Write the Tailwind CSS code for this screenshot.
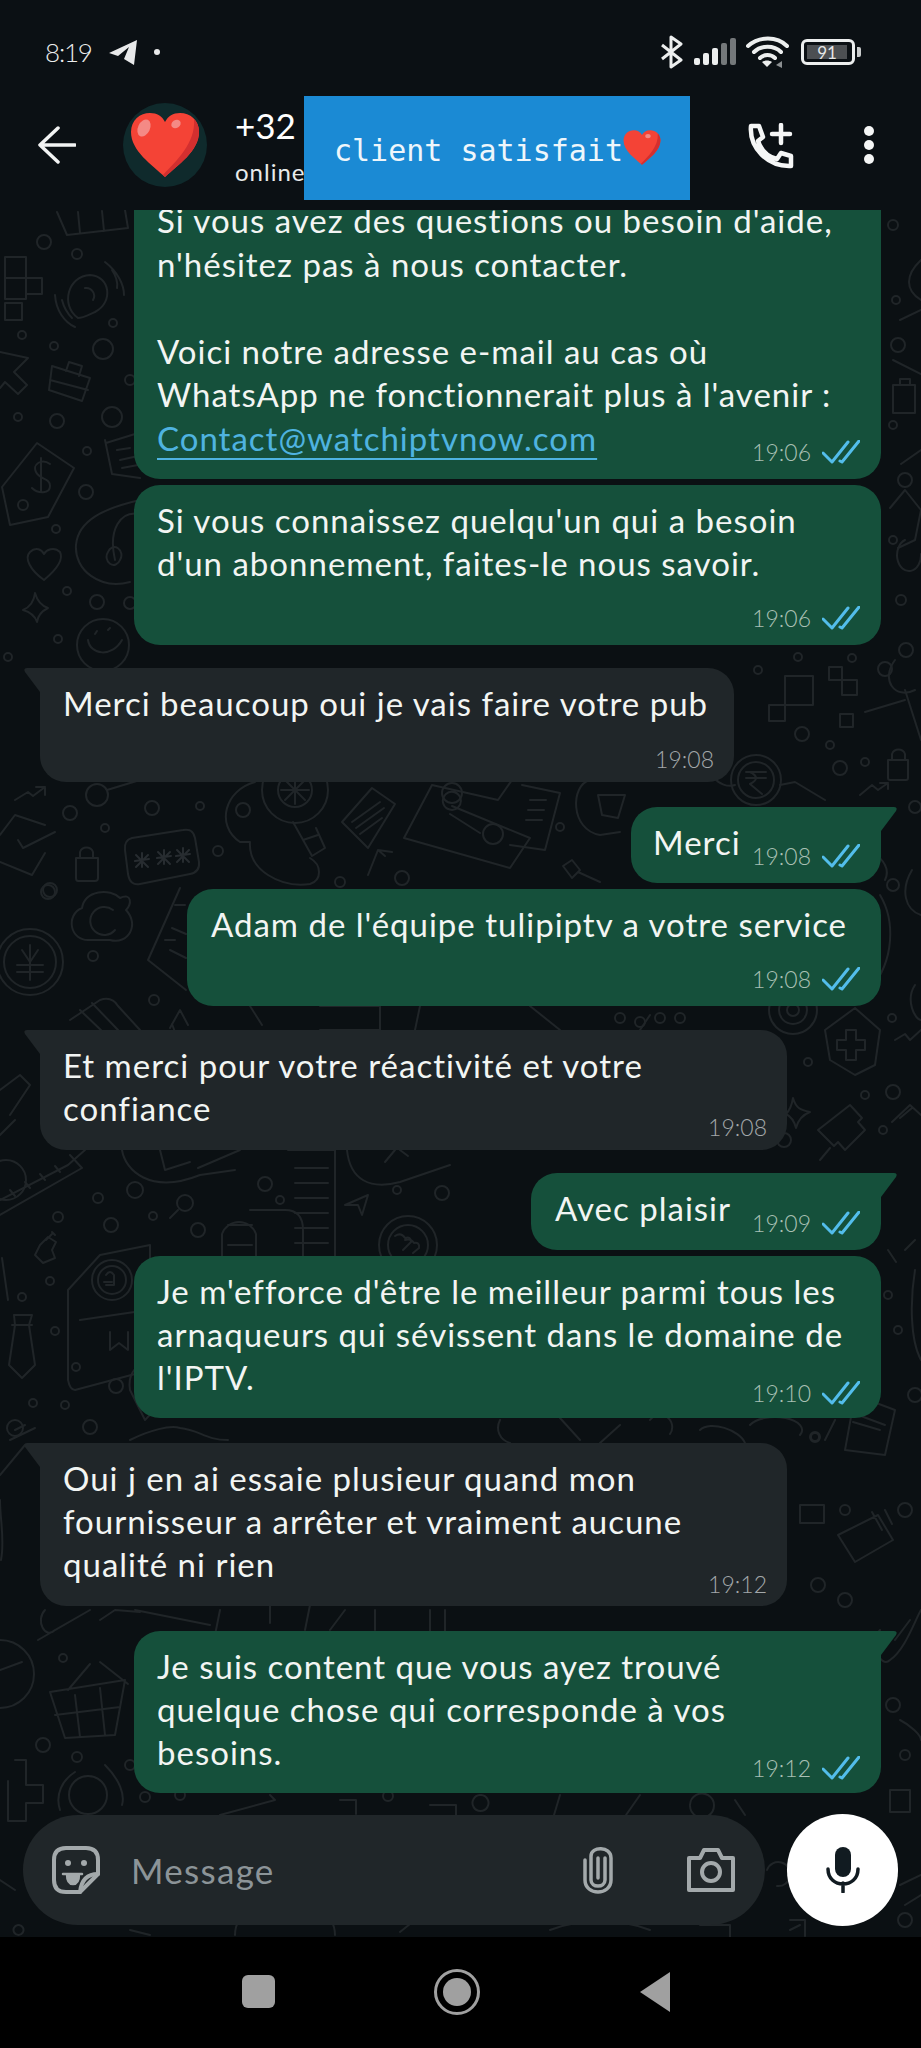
<!DOCTYPE html>
<html lang="fr">
<head>
<meta charset="UTF-8">
<title>WhatsApp</title>
<script src="https://cdn.jsdelivr.net/npm/@tailwindcss/browser@4"></script>
</head>
<body class="bg-black">
<div class="relative w-[921px] h-[2048px] overflow-hidden flex flex-col bg-[#0b1013] text-white [font-family:Lato,sans-serif]">

  <!-- wallpaper doodles -->
  <svg class="absolute inset-0" width="921" height="2048" viewBox="0 0 921 2048" fill="none" stroke="#202528" stroke-width="2" stroke-linecap="round" stroke-linejoin="round">
    <!-- left column, top -->
    <path d="M57 212 L67 235 L128 228 L125 210 M78 212 L80 233 M102 211 L104 231"/>
    <path d="M5 257h21v21h-21z M26 278h16v16h-16z M5 278h21v21h-21z M5 303h17v17h-17z"/>
    <path d="M78 318 C60 305 68 276 90 275 C110 276 114 302 95 312 C88 315 83 318 78 318 Z M85 288 a8 8 0 0 1 8 12 M105 262 C118 272 124 285 124 295 M112 270 C116 276 118 282 117 288 M55 295 C56 310 64 322 75 327 M62 300 C64 308 68 314 72 318"/>
    <path d="M0 352 L28 358 L14 372 L27 385 L18 394 L5 382 L0 388"/>
    <path d="M52 366 L90 378 L82 401 L49 390 Z M66 371 L69 362 L82 366 L79 376 M50 380 L88 390"/>
    <path d="M37 443 L74 468 L48 517 L10 525 L2 487 Z M50 464 C42 458 32 464 36 472 C40 480 50 478 50 486 C50 494 38 494 32 488 M41 458 L41 492"/>
    <path d="M106 443 L135 434 M105 440 L112 474 L140 478 M117 450 L130 448 M120 460 L138 456 M122 468 L138 465"/>
    <path d="M140 500 C105 508 78 520 76 545 C74 570 100 590 130 582 M115 560 C108 530 120 510 140 514 M108 552 a7 8 0 1 0 12 8 a7 8 0 1 0 -12 -8"/>
    <path d="M44 580 C30 570 24 558 30 552 C36 546 42 550 44 554 C46 550 54 546 60 552 C64 560 56 570 44 580 Z"/>
    <path d="M35 593 C34 602 30 607 23 610 C30 612 35 616 37 622 C38 615 42 611 48 608 C42 606 37 600 35 593 Z"/>
    <circle cx="103" cy="645" r="26"/><path d="M88 640 C90 655 112 658 122 640 M95 634 l2 -3 M108 630 l2 -2"/>
    <g>
      <circle cx="44" cy="242" r="7"/><circle cx="77" cy="254" r="5"/><circle cx="113" cy="323" r="4"/><circle cx="103" cy="349" r="10"/>
      <circle cx="22" cy="335" r="4"/><circle cx="54" cy="346" r="4"/><circle cx="57" cy="421" r="7"/><circle cx="18" cy="417" r="4"/>
      <circle cx="112" cy="417" r="10"/><circle cx="87" cy="451" r="4"/><circle cx="86" cy="492" r="7"/><circle cx="56" cy="529" r="4"/>
      <circle cx="67" cy="591" r="4"/><circle cx="97" cy="602" r="7"/><circle cx="58" cy="639" r="4"/><circle cx="8" cy="657" r="4"/>
      <circle cx="23" cy="505" r="5"/><circle cx="130" cy="380" r="5"/><circle cx="130" cy="603" r="6"/>
    </g>

    <!-- gap under first incoming -->
    <path d="M15 800 L28 792 L33 796 L45 787 M36 787 h9 v8"/>
    <circle cx="97" cy="795" r="11"/><path d="M107 790 L140 780"/>
    <circle cx="70" cy="813" r="7"/><circle cx="152" cy="808" r="7"/><circle cx="200" cy="806" r="4"/><circle cx="243" cy="810" r="7"/><circle cx="105" cy="828" r="4"/>
    <circle cx="218" cy="851" r="5"/><circle cx="48" cy="892" r="7"/><circle cx="340" cy="882" r="5"/><circle cx="402" cy="878" r="7"/>
    <path d="M0 835 L15 815 L45 825 M0 862 L32 875 L45 853 M18 840 L23 848 L55 832"/>
    <path d="M76 858 h22 v20 q0 3 -3 3 h-17 q-2 0 -2 -3 z M80 858 v-6 a7 7 0 0 1 13 0 v6"/>
    <path d="M132 838 Q124 840 125 850 L128 874 Q130 886 140 884 L190 874 Q200 872 199 862 L195 838 Q193 828 183 830 Z"/>
    <path d="M135 861 l14 -2 M142 853 v14 M136 855 l12 12 M148 855 l-12 12 M157 858 l14 -2 M164 850 v14 M158 852 l12 12 M170 852 l-12 12 M176 856 l14 -2 M183 848 v14 M177 850 l12 12 M189 850 l-12 12" stroke="#272c30"/>
    <path d="M255 782 C225 790 215 825 240 842 L250 842 C248 870 280 888 310 884 C322 880 322 865 310 858"/>
    <circle cx="295" cy="790" r="33"/><circle cx="295" cy="790" r="17"/><path d="M285 780 l20 20 M305 780 l-20 20 M295 776 v28 M281 790 h28"/>
    <path d="M293 822 L312 856 L325 848 L316 828 M303 840 l15 -5"/>
    <path d="M342 822 L372 788 L395 804 L368 848 Z M352 822 l28 -20 M356 828 l28 -20 M360 834 l22 -16"/>
    <path d="M368 875 L378 850 L385 856 M378 850 L392 852"/>
    <path d="M404 838 L432 785 M404 838 L510 868 L530 838 L452 806 M432 785 L498 800 L512 780 M445 795 a9 9 0 1 0 1 -1 M450 814 L480 833"/>
    <circle cx="493" cy="834" r="10"/><circle cx="452" cy="793" r="10"/>
    <path d="M522 785 L560 793 L545 850 L510 845 M530 800 h16 M528 810 h16 M526 820 h16"/>
    <path d="M590 780 C570 785 570 830 600 835 L620 832 M598 795 L625 795 L618 818 L602 815 Z"/>
    <circle cx="560" cy="827" r="4"/><path d="M563 866 L572 860 L580 870 L572 878 Z M578 872 L600 882"/>

    <!-- cloud / clock / clipboard -->
    <path d="M90 940 C70 942 65 915 82 908 C85 890 110 888 120 898 C132 892 132 905 126 910 C140 925 128 945 110 940 Z M113 910 a14 14 0 1 0 2 20"/>
    <circle cx="30" cy="962" r="33"/><circle cx="30" cy="962" r="26"/><path d="M22 950 L30 962 L38 950 M30 945 V980 M17 965 h26 M17 972 h26"/>
    <circle cx="50" cy="890" r="7"/><circle cx="93" cy="956" r="5"/><circle cx="154" cy="1000" r="5"/>
    <path d="M180 888 L148 960 L186 990 M185 905 h-10 M175 940 h-10 M170 950 l16 8 M172 928 l14 6"/>
    <path d="M70 1020 L100 1000 Q112 996 118 1006 L140 1030 M80 1010 L105 1034 M92 1003 L118 1030"/>
    <path d="M170 1028 L180 1010 L188 1025 M178 1040 L172 1024"/>

    <!-- right column -->
    <path d="M785 676h28v29h-28z M769 705h16v16h-16z M829 667h13v13h-13z M842 680h15v15h-15z M840 714h13v13h-13z"/>
    <circle cx="758" cy="670" r="4"/><circle cx="798" cy="657" r="4"/><circle cx="852" cy="658" r="4"/><circle cx="885" cy="669" r="7"/>
    <circle cx="802" cy="734" r="7"/><circle cx="830" cy="745" r="4"/><circle cx="840" cy="768" r="7"/><circle cx="865" cy="762" r="4"/>
    <path d="M888 760 h20 v18 q0 2 -2 2 h-16 q-2 0 -2 -2 z M892 760 v-6 a7 7 0 0 1 13 0 v6 M865 712 L905 700 M905 690 L921 740 M895 660 C880 680 895 700 915 690"/>
    <path d="M860 795 L872 785 L878 790 L888 783 M880 783 h8 v6"/>
    <circle cx="756" cy="780" r="25"/><circle cx="756" cy="780" r="18"/><path d="M746 772 h20 M746 778 h20 M750 772 q12 6 0 12 l12 10"/>
    <path d="M720 758 C700 770 720 790 735 785 M780 785 L795 782 L825 800"/>
    <circle cx="915" cy="807" r="6"/><path d="M868 830 L884 824"/>
    <path d="M880 895 C895 920 895 960 870 990 M870 850 C885 860 890 870 885 880"/>
    <circle cx="893" cy="885" r="6"/><path d="M912 870 C900 890 905 910 921 915 M915 985 C905 1000 915 1020 921 1020"/>
    <circle cx="793" cy="1010" r="6"/><circle cx="793" cy="1010" r="14"/><circle cx="793" cy="1010" r="24"/>
    <path d="M825 1030 L855 1008 L880 1030 L875 1065 L855 1075 L830 1060 Z"/>
    <path d="M846 1030 h10 v10 h9 v10 h-9 v10 h-10 v-10 h-9 v-10 h9 z"/>
    <circle cx="892" cy="1018" r="4"/><circle cx="808" cy="1062" r="4"/><circle cx="865" cy="1095" r="4"/><circle cx="893" cy="1092" r="7"/>
    <circle cx="883" cy="1130" r="4"/><circle cx="784" cy="1140" r="7"/>
    <path d="M793 1098 C796 1108 800 1110 810 1112 C802 1115 798 1120 796 1128 C794 1120 790 1116 786 1114 C790 1110 792 1104 793 1098 Z"/>
    <path d="M850 1105 L862 1118 L858 1122 L865 1130 L845 1150 L838 1142 L834 1146 L818 1130 Z M820 1160 L830 1148"/>
    <path d="M892 1122 L910 1105 L921 1115 M900 1118 l12 -10"/>
    <path d="M895 1040 L905 1034 L910 1040 L921 1030"/>
    <path d="M921 260 C905 275 905 290 921 300 M900 320 L921 310 M893 360 l28 14 M921 450 l-20 14 M905 540 a12 16 0 1 0 16 14"/>
    <circle cx="893" cy="225" r="5"/><circle cx="896" cy="300" r="4"/><circle cx="898" cy="345" r="7"/><circle cx="893" cy="425" r="4"/><circle cx="905" cy="480" r="7"/>
    <circle cx="893" cy="540" r="4"/><circle cx="901" cy="600" r="5"/><circle cx="906" cy="650" r="7"/>
    <path d="M893 385 h22 v28 h-22z M900 385 v-6 h10 v6"/>
    <path d="M890 508 L905 490 L921 510 L915 540 L898 548"/>

    <!-- gaps in the middle -->
    <path d="M250 1006 L262 1025 M320 1006 h60 v24 h-60 M420 1006 L415 1030 M530 1006 L560 1030 M650 1015 L640 1030"/>
    <circle cx="620" cy="1018" r="5"/><circle cx="640" cy="1022" r="5"/>
    <circle cx="660" cy="1018" r="5"/><circle cx="680" cy="1018" r="5"/>
    <path d="M0 1090 L20 1075 L30 1085 L10 1115 M0 1135 L15 1120"/>
    <circle cx="6" cy="1180" r="20"/>
    <path d="M85 1150 L68 1165 L0 1200 M70 1155 L82 1168 L0 1215 M10 1190 l5 6 M25 1182 l5 6 M40 1174 l5 6 M55 1166 l5 6"/>
    <circle cx="135" cy="1190" r="8"/><circle cx="98" cy="1198" r="5"/><circle cx="58" cy="1217" r="5"/><circle cx="111" cy="1225" r="7"/>
    <path d="M122 1150 C125 1170 150 1195 200 1175 L235 1170 M160 1150 L165 1170 L190 1162 M198 1168 L240 1150"/>
    <circle cx="265" cy="1184" r="7"/><circle cx="397" cy="1190" r="4"/><circle cx="442" cy="1193" r="7"/><circle cx="198" cy="1230" r="7"/><circle cx="153" cy="1216" r="4"/><circle cx="280" cy="1200" r="4"/>
    <circle cx="185" cy="1203" r="8"/><path d="M178 1210 L170 1218"/>
    <path d="M288 1150 h47 v120 h-47 M295 1168 h33 M295 1183 h33 M295 1198 h33 M295 1213 h33 M295 1228 h33 M295 1243 h33"/>
    <path d="M222 1256 v-22 a18 18 0 0 1 34 0 v22 M228 1225 h24 M228 1245 h24 M250 1210 h35 q18 0 18 20 v26"/>
    <path d="M347 1150 C350 1180 370 1190 400 1182 L450 1165 M395 1150 l-10 12 M400 1150 l8 6"/>
    <path d="M345 1205 L368 1195 L362 1215 L358 1205 Z"/>
    <circle cx="408" cy="1245" r="29"/><circle cx="408" cy="1245" r="20"/><path d="M395 1236 q6 -4 10 2 q6 -2 6 4 l-8 8 M405 1240 q6 -2 9 3 q6 -1 5 5 l-6 5"/>
    <path d="M2 1258 L8 1300"/>
    <path d="M68 1290 L100 1255 L150 1245 L150 1370 L75 1390 Q70 1390 68 1380 Z"/>
    <circle cx="112" cy="1280" r="20"/><circle cx="112" cy="1280" r="14"/><path d="M106 1275 q4 -6 8 0 v10 h-8 M104 1282 h8"/>
    <path d="M80 1320 L148 1310 M110 1332 v18 l9 -7 l9 7 v-18"/>
    <circle cx="50" cy="1281" r="4"/><circle cx="22" cy="1297" r="4"/><circle cx="55" cy="1331" r="4"/><circle cx="76" cy="1367" r="4"/><circle cx="33" cy="1403" r="4"/>
    <circle cx="65" cy="1405" r="4"/><circle cx="90" cy="1427" r="7"/>
    <path d="M14 1315 h18 l-3 10 l6 40 l-13 13 l-13 -13 l6 -40 z M12 1325 h20"/>
    <path d="M40 1245 l8 -8 l8 5 l-4 8 l3 8 l-12 5 l-8 -8 z M46 1240 l6 -6 M52 1232 l3 3"/>
    <path d="M130 1390 c-5 -30 30 -35 35 -10 c2 15 -10 30 -20 40 z"/><circle cx="116" cy="1386" r="7"/>
    <path d="M130 1440 C150 1430 170 1425 180 1428 C200 1430 205 1440 228 1440 M10 1440 L35 1428"/>
    <path d="M0 1475 L25 1445 M15 1430 l10 -5"/>
    <circle cx="15" cy="1428" r="8"/><path d="M1 1560 C5 1540 0 1520 0 1500"/>
    <path d="M700 1430 C710 1420 740 1430 745 1443 M750 1425 a 25 12 0 0 1 50 10 M825 1440 L835 1420"/>
    <circle cx="815" cy="1437" r="4"/><path d="M500 1420 C495 1430 500 1440 510 1443 M560 1418 L580 1440 M620 1425 L600 1443 M650 1420 a12 12 0 0 1 20 14"/>
    <path d="M855 1395 L895 1410 L885 1455 L845 1450 Z M860 1395 L868 1380 M850 1412 L885 1425 M853 1422 L880 1430"/>
    <circle cx="815" cy="1437" r="5"/><circle cx="905" cy="1510" r="7"/><circle cx="845" cy="1510" r="5"/>
    <path d="M800 1505 h24 v18 h-24z M838 1535 l40 -20 l15 25 l-38 22 z M872 1512 l10 18 M885 1510 l7 14"/>
    <circle cx="818" cy="1585" r="7"/><circle cx="845" cy="1600" r="7"/><circle cx="888" cy="1295" r="4"/><circle cx="898" cy="1330" r="4"/><circle cx="915" cy="1395" r="7"/>
    <path d="M880 1630 C870 1640 880 1670 890 1660 C905 1650 915 1620 921 1610 M895 1640 L910 1620"/>
    <path d="M905 1250 L915 1240 M888 1250 l8 12 M921 1360 C910 1340 910 1300 915 1270"/>
    <circle cx="893" cy="1705" r="7"/><circle cx="905" cy="1755" r="5"/><path d="M890 1790 h20 v22 h-20z M900 1720 C910 1725 921 1735 921 1740"/>
    <path d="M100 1620 L115 1610 L140 1612 M45 1610 C35 1620 45 1640 55 1630 L90 1610 M38 1640 L90 1610"/>
    <circle cx="63" cy="1658" r="4"/><circle cx="43" cy="1745" r="7"/><circle cx="77" cy="1757" r="5"/><circle cx="130" cy="1765" r="5"/>
    <path d="M0 1640 a33 33 0 1 1 0 68 M0 1670 l22 -8"/>
    <path d="M50 1692 L125 1680 L115 1735 L65 1738 Z M75 1695 l5 42 M100 1688 l5 47 M55 1715 L120 1707 M68 1690 l22 -26 M100 1662 l28 22"/>
    <path d="M15 1760 h11 v25 h17 v18 h-17 v18 h-18 v-40"/>
    <circle cx="88" cy="1795" r="19"/><path d="M60 1810 C55 1795 62 1780 75 1772 M105 1765 C120 1780 125 1795 122 1805"/>
    <path d="M135 1610 L210 1625 M220 1610 L215 1635 M248 1605 h22 v18 M310 1605 L305 1630 M345 1610 l-15 20 M375 1610 v20 M430 1610 v22 M445 1610 v22"/>
    <circle cx="145" cy="1797" r="5"/><circle cx="180" cy="1795" r="5"/><path d="M220 1815 L275 1800 L270 1795 M340 1800 h16 v14 M388 1796 m-5 0 a5 5 0 1 0 10 0 a5 5 0 1 0 -10 0 M430 1805 h26 v12 M480 1795 a8 8 0 1 0 1 0"/>
    <path d="M560 1795 l-6 20 M640 1795 l-14 20 M690 1805 a12 12 0 1 1 0 1 M735 1800 L745 1815"/>
    <path d="M790 1930 L800 1925 M130 1930 L150 1935 M235 1935 a40 30 0 0 1 100 0 M400 1932 l10 -8 M550 1930 a80 40 0 0 1 100 0"/>
    <path d="M767 1870 a12 12 0 1 1 10 16 M900 1885 L921 1875 M905 1905 l16 -10"/>
    <circle cx="905" cy="1920" r="7"/>
    <path d="M790 1920 h15 v16 M700 1925 h30 v12 M15 1890 L0 1880 M18 1925 a5 5 0 1 0 1 0"/>
  </svg>

  <!-- status bar + header -->
  <header class="relative z-10 h-[210px] shrink-0 bg-[#0b1014]">
    <div class="flex items-center h-[96px] pl-[45px] pr-[60px] pt-[8px]">
      <span class="text-[26px] tracking-[-1.2px] font-light leading-none text-[#eceeee]">8:19</span>
      <svg class="ml-[16px]" width="30" height="26" viewBox="0 0 30 26" fill="#e8e9ea"><path d="M1 14 L29 1 L26 26 L16 20 L21 8 L10 17 Z"/></svg>
      <span class="ml-[16px] w-[6px] h-[6px] rounded-full bg-[#e8e9ea]"></span>
      <div class="ml-auto flex items-center">
        <svg width="24" height="34" viewBox="0 0 24 34" fill="none" stroke="#eceeee" stroke-width="3" stroke-linejoin="round"><path d="M2 10 L21 25 L11 32 V2 L21 9 L2 24"/></svg>
        <svg class="ml-[10px]" width="42" height="28" viewBox="0 0 42 28"><rect x="0" y="20" width="6" height="7" rx="2" fill="#eceeee"/><rect x="9" y="15" width="6" height="12" rx="2" fill="#eceeee"/><rect x="18" y="10" width="6" height="17" rx="2" fill="#eceeee"/><rect x="27" y="5" width="6" height="22" rx="2" fill="#74787a"/><rect x="36" y="0" width="6" height="27" rx="2" fill="#74787a"/></svg>
        <svg class="ml-[10px]" width="44" height="32" viewBox="0 0 44 32" fill="none" stroke="#eceeee" stroke-width="4" stroke-linecap="round"><path d="M2 10 C13 0 31 0 41 10 M8 16 C15 9 28 9 35 16 M14 22 C18 18 25 18 29 22"/><path d="M21 31 L16 26 C19 24 23 24 26 26 Z" fill="#eceeee" stroke="none"/><path d="M30 29 L36 25 V32 Z" fill="#8b8f91" stroke="none"/></svg>
        <div class="ml-[11px] flex items-center">
          <div class="w-[54px] h-[26px] rounded-[6px] border-[3px] border-[#eceeee] p-[3px] flex">
            <div class="w-[40px] bg-[#4c4f52] flex items-center justify-center text-[17px] leading-none text-[#e5e6e6]">91</div>
          </div>
          <div class="ml-[2px] w-[4px] h-[10px] rounded-r-[2px] bg-[#c9cbcc]"></div>
        </div>
      </div>
    </div>
    <div class="relative h-[114px] pb-[16px] flex items-center">
      <svg class="ml-[38px]" width="38" height="38" viewBox="0 0 38 38" fill="none" stroke="#f2f3f3" stroke-width="3.5" stroke-linecap="round" stroke-linejoin="round"><path d="M2 19 H37 M20 2 L2 19 L20 36"/></svg>
      <div class="ml-[47px] w-[84px] h-[84px] rounded-full bg-[#0f2a2c] flex items-center justify-center">
        <svg width="70" height="64" viewBox="0 0 70 64"><path d="M35 64 C22 52 1 38 1 19 C1 7 10 0 20 0 C27 0 32 3 35 9 C38 3 43 0 50 0 C60 0 69 7 69 19 C69 38 48 52 35 64 Z" fill="#f44336"/><path d="M35 64 C48 52 69 38 69 19 C69 13 67 9 64 6 C66 30 46 48 33 62 Z" fill="#d32f2f"/><ellipse cx="14" cy="15" rx="6" ry="9" transform="rotate(25 14 15)" fill="#f48a85"/><ellipse cx="46" cy="11" rx="5" ry="4" transform="rotate(-35 46 11)" fill="#f48a85"/></svg>
      </div>
      <div class="ml-[28px] flex flex-col">
        <span class="text-[35px] leading-[40px] text-white">+32</span>
        <span class="mt-[13px] text-[24px] leading-[28px] tracking-[1px] text-[#e8eaea]">online</span>
      </div>
      <div class="absolute left-[304px] top-0 w-[386px] h-[104px] bg-[#1b8ad4] flex items-center pl-[30px] pt-[4px] [font-family:'DejaVu_Sans_Mono',monospace] text-[30px] text-[#eef6fb]">
        <span>client satisfait</span>
        <svg class="-mt-[6px]" width="38" height="35" viewBox="0 0 70 64"><path d="M35 64 C22 52 1 38 1 19 C1 7 10 0 20 0 C27 0 32 3 35 9 C38 3 43 0 50 0 C60 0 69 7 69 19 C69 38 48 52 35 64 Z" fill="#f44336"/><path d="M35 64 C48 52 69 38 69 19 C69 13 67 9 64 6 C66 30 46 48 33 62 Z" fill="#d32f2f"/><ellipse cx="46" cy="11" rx="5" ry="4" fill="#f48a85"/></svg>
      </div>
      <svg class="absolute left-[748px] top-[27px]" width="46" height="46" viewBox="0 0 46 46" fill="none" stroke="#f5f6f6" stroke-width="4.5" stroke-linejoin="round" stroke-linecap="round"><path d="M3 3 H11 L15 14 L10 18 C13 27 20 34 29 36 L33 30 L43 33 V43 C20 44 1 25 3 3 Z"/><path d="M33 2 V20 M24 11 H42"/></svg>
      <div class="absolute left-[864px] top-[30px] flex flex-col gap-[4px]">
        <span class="w-[10px] h-[10px] rounded-full bg-[#f5f6f6]"></span>
        <span class="w-[10px] h-[10px] rounded-full bg-[#f5f6f6]"></span>
        <span class="w-[10px] h-[10px] rounded-full bg-[#f5f6f6]"></span>
      </div>
    </div>
  </header>

  <!-- messages -->
  <main class="relative z-10 flex-1 min-h-0 overflow-hidden flex flex-col px-[40px]">
    <div class="relative self-end w-[747px] mt-[-32px] rounded-[26px] bg-[#15503b] px-[23px] pt-[21px] pb-[19px] text-[33px] tracking-[1px] leading-[43.5px] text-[#f2f5f3]">
      <p class="whitespace-nowrap">Si vous avez des questions ou besoin d'aide,<br>n'hésitez pas à nous contacter.<br><br>Voici notre adresse e-mail au cas où<br>WhatsApp ne fonctionnerait plus à l'avenir :<br><span class="text-[#4fb3e0] underline underline-offset-[7px] decoration-[1.5px]">Contact@watchiptvnow.com</span></p>
      <div class="absolute right-[21px] bottom-[15px] flex items-center gap-[11px] text-[23px] tracking-normal leading-[24px] font-light text-[#a9c0b4]">19:06
        <svg width="38" height="24" viewBox="0 0 38 24" fill="none" stroke="#53bdeb" stroke-width="3" stroke-linecap="round" stroke-linejoin="round"><path d="M1 13 L10 22 L26 2 M18 21 L20 22 L37 1"/></svg>
      </div>
    </div>

    <div class="relative self-end w-[747px] mt-[6px] rounded-[26px] bg-[#15503b] px-[23px] pt-[14px] pb-[60px] text-[33px] tracking-[1px] leading-[43px] text-[#f2f5f3]">
      <p class="whitespace-nowrap">Si vous connaissez quelqu'un qui a besoin<br>d'un abonnement, faites-le nous savoir.</p>
      <div class="absolute right-[21px] bottom-[15px] flex items-center gap-[11px] text-[23px] tracking-normal leading-[24px] font-light text-[#a9c0b4]">19:06
        <svg width="38" height="24" viewBox="0 0 38 24" fill="none" stroke="#53bdeb" stroke-width="3" stroke-linecap="round" stroke-linejoin="round"><path d="M1 13 L10 22 L26 2 M18 21 L20 22 L37 1"/></svg>
      </div>
    </div>

    <div class="relative self-start w-[694px] mt-[23px] rounded-[26px] rounded-tl-none bg-[#202629] px-[23px] pt-[14px] pb-[57px] text-[33px] tracking-[1px] leading-[43px] text-[#f2f5f3]">
      <svg class="absolute right-full top-0" width="16" height="26" viewBox="0 0 16 26" fill="#202629"><path d="M16 0 H3 Q-1 0 1 4 L16 24 Z"/></svg>
      <p class="whitespace-nowrap">Merci beaucoup oui je vais faire votre pub</p>
      <div class="absolute right-[20px] bottom-[11px] text-[23px] tracking-normal leading-[24px] font-light text-[#a3a8aa]">19:08</div>
    </div>

    <div class="relative self-end w-[250px] mt-[25px] rounded-[26px] rounded-tr-none bg-[#15503b] pl-[22px] pr-[24px] pt-[14px] pb-[19px] text-[33px] tracking-[1px] leading-[43px] text-[#f2f5f3]">
      <svg class="absolute left-full top-0" width="16" height="26" viewBox="0 0 16 26" fill="#15503b"><path d="M0 0 H13 Q17 0 15 4 L0 24 Z"/></svg>
      <p class="whitespace-nowrap">Merci</p>
      <div class="absolute right-[21px] bottom-[15px] flex items-center gap-[11px] text-[23px] tracking-normal leading-[24px] font-light text-[#a9c0b4]">19:08
        <svg width="38" height="24" viewBox="0 0 38 24" fill="none" stroke="#53bdeb" stroke-width="3" stroke-linecap="round" stroke-linejoin="round"><path d="M1 13 L10 22 L26 2 M18 21 L20 22 L37 1"/></svg>
      </div>
    </div>

    <div class="relative self-end w-[694px] mt-[6px] rounded-[26px] bg-[#15503b] px-[24px] pt-[14px] pb-[60px] text-[33px] tracking-[1px] leading-[43px] text-[#f2f5f3]">
      <p class="whitespace-nowrap">Adam de l'équipe tulipiptv a votre service</p>
      <div class="absolute right-[21px] bottom-[15px] flex items-center gap-[11px] text-[23px] tracking-normal leading-[24px] font-light text-[#a9c0b4]">19:08
        <svg width="38" height="24" viewBox="0 0 38 24" fill="none" stroke="#53bdeb" stroke-width="3" stroke-linecap="round" stroke-linejoin="round"><path d="M1 13 L10 22 L26 2 M18 21 L20 22 L37 1"/></svg>
      </div>
    </div>

    <div class="relative self-start w-[747px] mt-[24px] rounded-[26px] rounded-tl-none bg-[#202629] px-[23px] pt-[14px] pb-[20px] text-[33px] tracking-[1px] leading-[43px] text-[#f2f5f3]">
      <svg class="absolute right-full top-0" width="16" height="26" viewBox="0 0 16 26" fill="#202629"><path d="M16 0 H3 Q-1 0 1 4 L16 24 Z"/></svg>
      <p class="whitespace-nowrap">Et merci pour votre réactivité et votre<br>confiance</p>
      <div class="absolute right-[20px] bottom-[11px] text-[23px] tracking-normal leading-[24px] font-light text-[#a3a8aa]">19:08</div>
    </div>

    <div class="relative self-end w-[350px] mt-[23px] rounded-[26px] rounded-tr-none bg-[#15503b] px-[24px] pt-[14px] pb-[20px] text-[33px] tracking-[1px] leading-[43px] text-[#f2f5f3]">
      <svg class="absolute left-full top-0" width="16" height="26" viewBox="0 0 16 26" fill="#15503b"><path d="M0 0 H13 Q17 0 15 4 L0 24 Z"/></svg>
      <p class="whitespace-nowrap">Avec plaisir</p>
      <div class="absolute right-[21px] bottom-[15px] flex items-center gap-[11px] text-[23px] tracking-normal leading-[24px] font-light text-[#a9c0b4]">19:09
        <svg width="38" height="24" viewBox="0 0 38 24" fill="none" stroke="#53bdeb" stroke-width="3" stroke-linecap="round" stroke-linejoin="round"><path d="M1 13 L10 22 L26 2 M18 21 L20 22 L37 1"/></svg>
      </div>
    </div>

    <div class="relative self-end w-[747px] mt-[6px] rounded-[26px] bg-[#15503b] px-[23px] pt-[14px] pb-[19px] text-[33px] tracking-[1px] leading-[43px] text-[#f2f5f3]">
      <p class="whitespace-nowrap">Je m'efforce d'être le meilleur parmi tous les<br>arnaqueurs qui sévissent dans le domaine de<br>l'IPTV.</p>
      <div class="absolute right-[21px] bottom-[13px] flex items-center gap-[11px] text-[23px] tracking-normal leading-[24px] font-light text-[#a9c0b4]">19:10
        <svg width="38" height="24" viewBox="0 0 38 24" fill="none" stroke="#53bdeb" stroke-width="3" stroke-linecap="round" stroke-linejoin="round"><path d="M1 13 L10 22 L26 2 M18 21 L20 22 L37 1"/></svg>
      </div>
    </div>

    <div class="relative self-start w-[747px] mt-[25px] rounded-[26px] rounded-tl-none bg-[#202629] px-[23px] pt-[14px] pb-[20px] text-[33px] tracking-[1px] leading-[43px] text-[#f2f5f3]">
      <svg class="absolute right-full top-0" width="16" height="26" viewBox="0 0 16 26" fill="#202629"><path d="M16 0 H3 Q-1 0 1 4 L16 24 Z"/></svg>
      <p class="whitespace-nowrap">Oui j en ai essaie plusieur quand mon<br>fournisseur a arrêter et vraiment aucune<br>qualité ni rien</p>
      <div class="absolute right-[20px] bottom-[10px] text-[23px] tracking-normal leading-[24px] font-light text-[#a3a8aa]">19:12</div>
    </div>

    <div class="relative self-end w-[747px] mt-[25px] rounded-[26px] rounded-tr-none bg-[#15503b] px-[23px] pt-[14px] pb-[19px] text-[33px] tracking-[1px] leading-[43px] text-[#f2f5f3]">
      <svg class="absolute left-full top-0" width="16" height="26" viewBox="0 0 16 26" fill="#15503b"><path d="M0 0 H13 Q17 0 15 4 L0 24 Z"/></svg>
      <p class="whitespace-nowrap">Je suis content que vous ayez trouvé<br>quelque chose qui corresponde à vos<br>besoins.</p>
      <div class="absolute right-[21px] bottom-[13px] flex items-center gap-[11px] text-[23px] tracking-normal leading-[24px] font-light text-[#a9c0b4]">19:12
        <svg width="38" height="24" viewBox="0 0 38 24" fill="none" stroke="#53bdeb" stroke-width="3" stroke-linecap="round" stroke-linejoin="round"><path d="M1 13 L10 22 L26 2 M18 21 L20 22 L37 1"/></svg>
      </div>
    </div>

    <!-- input row -->
    <div class="absolute left-[23px] right-[23px] bottom-[11px] flex items-center justify-between">
      <div class="w-[742px] h-[110px] rounded-[55px] bg-[#202629] flex items-center pl-[29px] pr-[30px]">
        <svg width="48" height="48" viewBox="0 0 48 48" fill="none" stroke="#a3a9ab" stroke-width="4" stroke-linejoin="round" stroke-linecap="round"><path d="M14 2 H34 Q46 2 46 14 V28 L28 46 H14 Q2 46 2 34 V14 Q2 2 14 2 Z"/><path d="M46 28 Q30 28 28 46"/><path d="M11 28 H30 M15 28 Q15 38 21 38 Q27 38 27 28" fill="#a3a9ab" stroke-width="2.5"/><circle cx="16" cy="17" r="3" fill="#a3a9ab" stroke="none"/><circle cx="32" cy="17" r="3" fill="#a3a9ab" stroke="none"/></svg>
        <span class="ml-[31px] text-[35px] tracking-[1.3px] leading-none text-[#8c9498]">Message</span>
        <svg class="ml-auto" width="30" height="48" viewBox="0 0 30 48" fill="none" stroke="#a3a9ab" stroke-width="3.5" stroke-linecap="round"><path d="M22 12 V34 C22 42 8 42 8 34 V10 C8 0 28 0 28 12 V34 C28 50 2 50 2 34 V14"/><path d="M15 12 V32"/></svg>
        <svg class="ml-[74px]" width="48" height="44" viewBox="0 0 48 44" fill="none" stroke="#a3a9ab" stroke-width="4" stroke-linejoin="round"><path d="M2 10 H13 L17 2 H31 L35 10 H46 V42 H2 Z"/><circle cx="24" cy="24" r="9"/></svg>
      </div>
      <div class="w-[111px] h-[112px] rounded-full bg-white flex items-center justify-center">
        <svg width="34" height="46" viewBox="0 0 34 46" fill="none" stroke="#111b21" stroke-width="3.5" stroke-linecap="round"><rect x="9" y="0" width="16" height="30" rx="8" fill="#111b21" stroke="none"/><path d="M2 22 C2 42 32 42 32 22 M17 36 V45"/></svg>
      </div>
    </div>
    <div class="h-[144px] shrink-0"></div>
  </main>

  <!-- android nav -->
  <nav class="relative z-10 h-[111px] shrink-0 bg-black flex items-center pb-[2px]">
    <div class="ml-[242px] w-[33px] h-[33px] rounded-[6px] bg-[#a0a0a0]"></div>
    <div class="ml-[159px] w-[46px] h-[46px] rounded-full border-[3px] border-[#a0a0a0] flex items-center justify-center">
      <div class="w-[28px] h-[28px] rounded-full bg-[#a0a0a0]"></div>
    </div>
    <svg class="ml-[160px]" width="30" height="40" viewBox="0 0 30 40" fill="#a0a0a0"><path d="M30 0 V40 L0 20 Z"/></svg>
  </nav>
</div>
</body>
</html>
